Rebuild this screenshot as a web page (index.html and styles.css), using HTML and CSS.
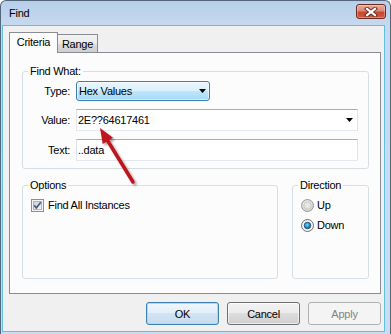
FILE: index.html
```html
<!DOCTYPE html>
<html>
<head>
<meta charset="utf-8">
<title>Find</title>
<link rel="stylesheet" href="styles.css">
</head>
<body>
<div class="window">
  <div class="titlebar">
    <span class="title">Find</span>
    <div class="close">
      <svg width="14" height="10" viewBox="0 0 14 10">
        <path d="M3 1.8 L11 8.2 M11 1.8 L3 8.2" stroke="#5a2418" stroke-width="4" stroke-linecap="square" fill="none"/>
        <path d="M3 1.8 L11 8.2 M11 1.8 L3 8.2" stroke="#ffffff" stroke-width="2.2" stroke-linecap="square" fill="none"/>
      </svg>
    </div>
  </div>
  <div class="client">
    <div class="tabs">
      <div class="tab tab-active">Criteria</div>
      <div class="tab">Range</div>
    </div>
    <div class="panel">
      <div class="group group-find">
        <div class="group-title">Find What:</div>
        <div class="form">
          <span class="lbl">Type:</span>
          <div class="combo combo-list">
            <span class="combo-text">Hex Values</span>
            <svg class="caret" width="7" height="4" viewBox="0 0 7 4"><path d="M0 0 H7 L3.5 4 Z" fill="#000"/></svg>
          </div>
          <span class="lbl">Value:</span>
          <div class="combo combo-edit">
            <span class="combo-text">2E??64617461</span>
            <svg class="caret" width="7" height="4" viewBox="0 0 7 4"><path d="M0 0 H7 L3.5 4 Z" fill="#000"/></svg>
          </div>
          <span class="lbl">Text:</span>
          <div class="combo textbox"><span class="combo-text">..data</span></div>
        </div>
      </div>
      <div class="row">
        <div class="group group-options">
          <div class="group-title">Options</div>
          <div class="opt-row">
            <svg class="checkbox" width="13" height="13" viewBox="0 0 13 13">
              <defs>
                <linearGradient id="cbfill" x1="0" y1="0" x2="1" y2="1">
                  <stop offset="0" stop-color="#cbcfd5"/>
                  <stop offset="1" stop-color="#f7f7f7"/>
                </linearGradient>
              </defs>
              <rect x="0.5" y="0.5" width="12" height="12" fill="#f4f4f4" stroke="#8e8f8f"/>
              <rect x="2.5" y="2.5" width="8" height="8" fill="url(#cbfill)" stroke="#b0b5bb"/>
              <path d="M3.2 6.3 L5.4 8.8 L9.8 3.2" stroke="#4b5f8e" stroke-width="1.8" fill="none"/>
            </svg>
            <span>Find All Instances</span>
          </div>
        </div>
        <div class="group group-direction">
          <div class="group-title">Direction</div>
          <div class="opt-row">
            <svg class="radio" width="13" height="13" viewBox="0 0 13 13">
              <defs>
                <radialGradient id="rgoff" cx="0.45" cy="0.4" r="0.6">
                  <stop offset="0" stop-color="#f6f6f6"/>
                  <stop offset="1" stop-color="#cfcfcf"/>
                </radialGradient>
              </defs>
              <circle cx="6.5" cy="6.5" r="6" fill="url(#rgoff)" stroke="#9a9a9a"/>
              <circle cx="6.5" cy="6.5" r="3.6" fill="#e6e6e6" stroke="#c4c4c4" stroke-width="0.8"/>
            </svg>
            <span>Up</span>
          </div>
          <div class="opt-row">
            <svg class="radio" width="13" height="13" viewBox="0 0 13 13">
              <defs>
                <radialGradient id="rgon" cx="0.45" cy="0.4" r="0.6">
                  <stop offset="0" stop-color="#7fd3f7"/>
                  <stop offset="0.6" stop-color="#1b8fd0"/>
                  <stop offset="1" stop-color="#155d8e"/>
                </radialGradient>
              </defs>
              <circle cx="6.5" cy="6.5" r="6" fill="#f2f2f2" stroke="#6f6f6f"/>
              <circle cx="6.5" cy="6.5" r="3.3" fill="url(#rgon)" stroke="#1f4f78" stroke-width="0.8"/>
            </svg>
            <span>Down</span>
          </div>
        </div>
      </div>
    </div>
    <div class="buttons">
      <button class="btn btn-default">OK</button>
      <button class="btn">Cancel</button>
      <button class="btn btn-disabled">Apply</button>
    </div>
  </div>
  <svg class="arrow" width="391" height="334" viewBox="0 0 391 334">
    <defs>
      <filter id="sh" x="-50%" y="-50%" width="200%" height="200%">
        <feDropShadow dx="2" dy="2" stdDeviation="1.3" flood-color="#000" flood-opacity="0.35"/>
      </filter>
    </defs>
    <g filter="url(#sh)">
      <line x1="106" y1="138" x2="133" y2="182" stroke="#be121c" stroke-width="3.5" stroke-linecap="round"/>
      <polygon points="100,128 113,137.7 102.7,143.9" fill="#be121c"/>
    </g>
  </svg>
</div>
</body>
</html>
```

FILE: styles.css
```css
* { box-sizing: border-box; }
html, body { margin: 0; padding: 0; }
body {
  width: 391px;
  height: 334px;
  overflow: hidden;
  background: #ffffff;
  font-family: "Liberation Sans", Arial, sans-serif;
  font-size: 11px;
  letter-spacing: -0.25px;
  color: #000;
}
.window {
  position: relative;
  width: 391px;
  height: 334px;
  border: 1px solid #52667c;
  border-bottom: none;
  border-radius: 6px 6px 0 0;
  background: linear-gradient(#b7cfea, #c6d9ee 24px, #c9dcf0);
  padding: 0 5px 2px 1px;
  display: flex;
  flex-direction: column;
}
.titlebar {
  height: 24px;
  display: flex;
  align-items: flex-start;
  padding-left: 7px;
}
.title {
  margin-top: 6px;
  line-height: 13px;
  color: #000;
}
.close {
  margin-left: auto;
  margin-top: 3px;
  margin-right: -1px;
  width: 30px;
  height: 15px;
  border: 1px solid #6b2b20;
  border-radius: 3px;
  background: linear-gradient(#e9aa9a, #dc8a76 45%, #c8472f 55%, #cf5a40);
  box-shadow: inset 0 0 0 1px rgba(255,255,255,0.3);
  display: flex;
  align-items: center;
  justify-content: center;
}
.client {
  margin: 1px;
  height: 305px;
  background: #f0f0f0;
  box-shadow: 0 0 0 1px #62bfe0;
  padding: 6px 3px 6px 6px;
  display: flex;
  flex-direction: column;
}
.tabs {
  height: 20px;
  display: flex;
  align-items: flex-end;
}
.tab {
  height: 18px;
  width: 41px;
  border: 1px solid #898c95;
  border-bottom: none;
  background: linear-gradient(#f3f3f3, #ebebeb 50%, #dddddd 50%, #cfcfcf);
  display: flex;
  align-items: center;
  justify-content: center;
  padding-top: 1px;
  margin-left: -1px;
}
.tab-active {
  position: relative;
  z-index: 1;
  width: 49px;
  height: 21px;
  margin-left: 0;
  margin-bottom: -1px;
  background: #fcfcfc;
  padding-top: 0;
  padding-bottom: 2px;
}
.panel {
  height: 242px;
  border: 1px solid #898c95;
  background: #fcfcfc;
  padding: 18px 11px 14px 12px;
}
.group {
  border: 1px solid #d5dfe5;
  border-radius: 3px;
}
.group-title {
  width: fit-content;
  margin: -7px 0 0 5px;
  padding: 0 2px;
  background: #fcfcfc;
  line-height: 13px;
}
.group-find {
  height: 98px;
  padding-right: 10px;
}
.form {
  margin-top: 3px;
  display: grid;
  grid-template-columns: 47px 1fr;
  grid-template-rows: 20px 22px 22px;
  column-gap: 6px;
  row-gap: 8px;
}
.lbl {
  justify-self: end;
  align-self: center;
  line-height: 13px;
}
.combo {
  display: flex;
  align-items: center;
  justify-content: space-between;
}
.combo-list {
  width: 134px;
  border: 1px solid #3c7fb1;
  border-radius: 3px;
  background: linear-gradient(#eaf6fd, #d9f0fc 50%, #bee6fd 50%, #a7d9f5);
  box-shadow: inset 0 0 0 1px rgba(255,255,255,0.5);
  padding: 0 3px 0 2px;
}
.combo-edit, .textbox {
  border: 1px solid #e2e3ea;
  border-top-color: #abadb3;
  border-bottom-color: #e3e9ef;
  background: #ffffff;
  padding: 0 4px 0 1px;
}
.combo-text {
  line-height: 13px;
}
.row {
  margin-top: 16px;
  height: 94px;
  display: flex;
  gap: 14px;
}
.group-options { width: 256px; }
.group-direction { width: 77px; }
.opt-row {
  display: flex;
  align-items: center;
  height: 13px;
  margin: 7px 0 0 8px;
  line-height: 13px;
}
.checkbox { margin-right: 4px; flex: none; }
.radio { margin-right: 3px; flex: none; }
.buttons {
  margin-top: 8px;
  height: 23px;
  display: flex;
  justify-content: flex-end;
  gap: 8px;
}
.btn {
  width: 73px;
  height: 23px;
  padding: 0;
  font-family: inherit;
  font-size: 11px;
  letter-spacing: inherit;
  color: #000;
  border: 1px solid #707070;
  border-radius: 3px;
  background: linear-gradient(#f2f2f2, #ebebeb 50%, #dddddd 50%, #cfcfcf);
  box-shadow: inset 0 0 0 1px rgba(255,255,255,0.6);
}
.btn-default {
  border-color: #3c7fb1;
  background: linear-gradient(#eef6fc, #e2eef8 50%, #d2e4f3 50%, #c6dcef);
  box-shadow: inset 0 0 0 1px #a8dcf4;
}
.btn-disabled {
  border-color: #adb2b5;
  background: #f4f4f4;
  box-shadow: none;
  color: #838383;
}
.arrow {
  position: absolute;
  left: -1px;
  top: -1px;
  pointer-events: none;
}
```
